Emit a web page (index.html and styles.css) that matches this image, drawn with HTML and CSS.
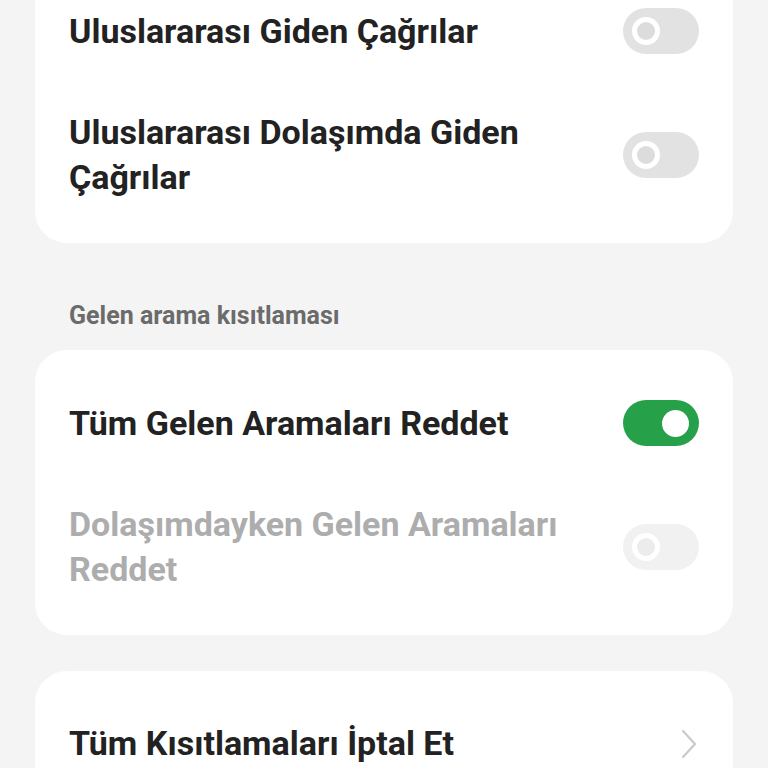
FILE: index.html
```html
<!DOCTYPE html>
<html lang="tr">
<head>
  <meta charset="UTF-8">
  <title>Arama Kısıtlama</title>
  <link rel="stylesheet" href="styles.css">
</head>
<body>
  <div class="page">
    <div class="card card-first">
      <div class="row">
        <span class="label">Uluslararası Giden Çağrılar</span>
        <span class="toggle"><span class="knob"></span></span>
      </div>
      <div class="row">
        <span class="label">Uluslararası Dolaşımda Giden Çağrılar</span>
        <span class="toggle"><span class="knob"></span></span>
      </div>
    </div>

    <h2 class="section-title">Gelen arama kısıtlaması</h2>

    <div class="card">
      <div class="row">
        <span class="label">Tüm Gelen Aramaları Reddet</span>
        <span class="toggle on"><span class="knob"></span></span>
      </div>
      <div class="row disabled">
        <span class="label">Dolaşımdayken Gelen Aramaları Reddet</span>
        <span class="toggle"><span class="knob"></span></span>
      </div>
    </div>

    <div class="card card-last">
      <div class="row">
        <span class="label">Tüm Kısıtlamaları İptal Et</span>
        <svg class="chevron" width="16" height="30" viewBox="0 0 16 30">
          <polyline points="2,2 14,15 2,28" fill="none" stroke="#c9c9c9" stroke-width="2.2" stroke-linecap="round" stroke-linejoin="round" />
        </svg>
      </div>
    </div>
  </div>
</body>
</html>
```

FILE: styles.css
```css
body {
  margin: 0;
  background: #f4f4f4;
  font-family: Roboto, "Noto Sans", sans-serif;
  color: #222;
  overflow: hidden;
}

.page {
  padding: 0 35px;
}

.card {
  background: #fff;
  border-radius: 32px;
  padding: 22px 34px 15px;
}

.card-first {
  margin-top: -42px;
}

.card-last {
  margin-top: 36px;
}

.row {
  display: flex;
  align-items: center;
  justify-content: space-between;
  gap: 40px;
  padding: 28px 0;
}

.label {
  font-size: 34px;
  font-weight: 700;
  line-height: 45px;
}

.row.disabled .label {
  color: #adadad;
}

.section-title {
  margin: 58px 0 19px;
  padding-left: 34px;
  font-size: 25px;
  line-height: 30px;
  font-weight: 700;
  color: #6b6b6b;
}

.toggle {
  flex: none;
  width: 76px;
  height: 46px;
  border-radius: 23px;
  background: #e2e2e2;
  display: flex;
  align-items: center;
  padding: 0 9px;
  box-sizing: border-box;
}

.knob {
  width: 28px;
  height: 28px;
  border-radius: 50%;
  box-sizing: border-box;
  border: 5px solid #fff;
  background: #dcdcdc;
}

.toggle.on {
  background: #27a149;
  justify-content: flex-end;
  padding: 0 10px;
}

.toggle.on .knob {
  width: 27px;
  height: 27px;
  border: none;
  background: #fff;
}

.row.disabled .toggle {
  background: #f1f1f1;
}

.row.disabled .knob {
  background: #ececec;
}

.chevron {
  flex: none;
  margin-right: 2px;
}
```
